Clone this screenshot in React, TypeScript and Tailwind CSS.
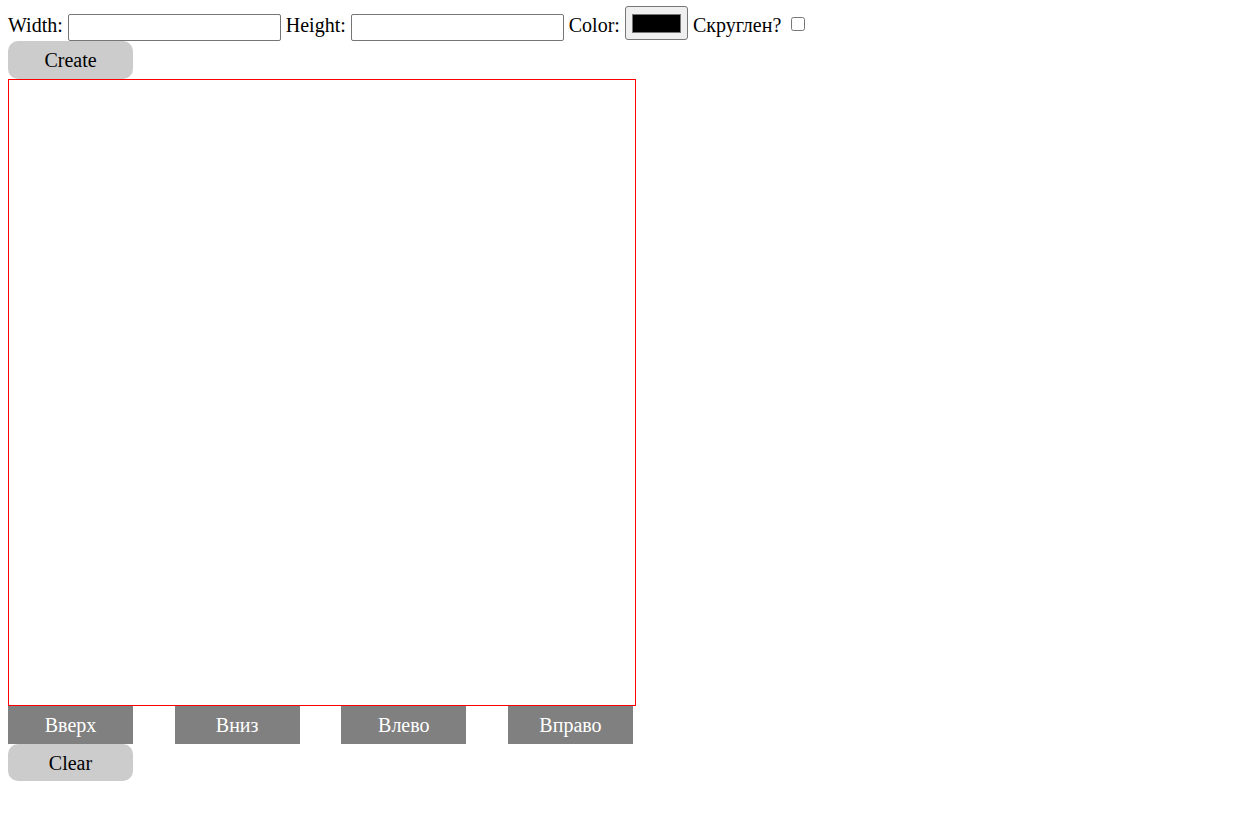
import React from 'react';

const moves = ['Вверх', 'Вниз', 'Влево', 'Вправо'];

export default function App() {
  return (
    <div className="min-h-screen bg-white text-black text-[20px] font-['Liberation_Serif','Times_New_Roman',serif] leading-normal">
      {/* Controls */}
      <div className="flex items-start h-[41px] pl-2">
        <span className="mt-[10px]">Width:</span>
        <input type="text" className="ml-[5px] mt-[14px] w-[213px] h-[27px] border border-[#767676] rounded-[2px] bg-white" />
        <span className="ml-[5px] mt-[10px]">Height:</span>
        <input type="text" className="ml-[5px] mt-[14px] w-[213px] h-[27px] border border-[#767676] rounded-[2px] bg-white" />
        <span className="ml-[5px] mt-[10px]">Color:</span>
        <div className="ml-[5px] mt-[6px] w-[63px] h-[34px] border border-[#767676] rounded-[3px] bg-[#efefef] flex items-center justify-center">
          <div className="w-[49px] h-[19px] bg-black border border-[#777]" />
        </div>
        <span className="ml-[5px] mt-[10px]">Скруглен?</span>
        <input type="checkbox" className="ml-[10px] mt-[17px] w-[14px] h-[14px]" />
      </div>

      <div className="pl-2">
        <button className="w-[125px] h-[38px] rounded-[10px] bg-[#cccccc] text-black">Create</button>

        {/* Board */}
        <div className="w-[628px] h-[627px] border border-[#ff0000] bg-white" />

        <div className="flex justify-between w-[625px]">
          {moves.map((m) => (
            <button key={m} className="w-[125px] h-[38px] bg-[#808080] text-white">
              {m}
            </button>
          ))}
        </div>

        <button className="w-[125px] h-[37px] rounded-[10px] bg-[#cccccc] text-black">Clear</button>
      </div>
    </div>
  );
}
